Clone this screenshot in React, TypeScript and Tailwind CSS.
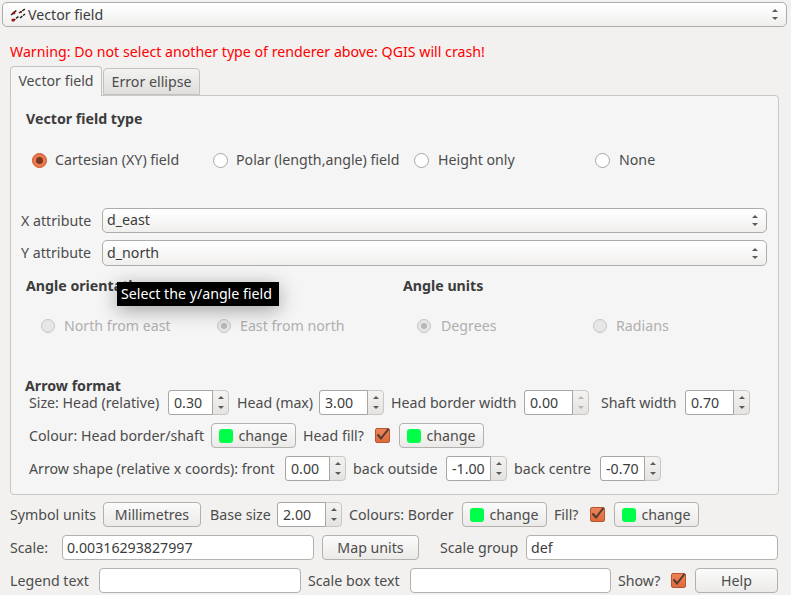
import React from "react";

const textCls = "whitespace-nowrap shrink-0 text-[#4c4c4c]";

// little up/down arrows, as on the gtk spin box and combo
const Arrows = ({ dim, gap }: { dim?: boolean; gap: string }) => (
  <div className={`flex flex-col items-center ${gap}`}>
    <div className={`w-0 h-0 border-x-[3px] border-x-transparent border-b-[3px] ${dim ? "border-b-[#b5b5b5]" : "border-b-[#5a5a5a]"}`} />
    <div className={`w-0 h-0 border-x-[3px] border-x-transparent border-t-[3px] ${dim ? "border-t-[#b5b5b5]" : "border-t-[#5a5a5a]"}`} />
  </div>
);

const Label = ({ w, children }: { w: string; children: React.ReactNode }) => (
  <span className={`${textCls} ${w}`}>{children}</span>
);

const Spin = ({ value, w, dim }: { value: string; w: string; dim?: boolean }) => (
  <div className={`${w} h-[25px] shrink-0 flex rounded-[4px] border border-[#c9c7c4] bg-linear-to-b from-[#f4f3f2] to-[#e4e3e1]`}>
    <div className="flex-1 flex items-center pl-[5px] bg-white rounded-l-[3px] border border-[#a8a6a3] -m-px mr-0 text-[#3c3c3c]">
      {value}
    </div>
    <div className="w-[15px] flex items-center justify-center">
      <Arrows dim={dim} gap="gap-[7px]" />
    </div>
  </div>
);

const Btn = ({ w, children }: { w: string; children: React.ReactNode }) => (
  <div className={`${w} h-[25px] shrink-0 flex items-center justify-center rounded-[4px] border border-[#b3b1ae] bg-linear-to-b from-[#fbfbfb] to-[#ebeae8] text-[#4c4c4c]`}>
    {children}
  </div>
);

const ColourBtn = () => (
  <Btn w="w-[85px]">
    <span className="w-[14px] h-[14px] rounded-[3px] bg-[#00ff48] mr-[5px]" />
    change
  </Btn>
);

const Check = () => (
  <div className="w-[15px] h-[15px] shrink-0 rounded-[2px] border border-[#b5562f] bg-linear-to-b from-[#ee8358] to-[#dd6a3c] flex items-center justify-center">
    <svg viewBox="0 0 15 15" className="w-[15px] h-[15px] overflow-visible">
      <path d="M2.5 6.5 L6 10.5 L13.5 1" fill="none" stroke="#4e3a30" strokeWidth="2" />
    </svg>
  </div>
);

const Radio = ({ on, off }: { on?: boolean; off?: boolean }) => {
  if (off) {
    return (
      <div className="w-[14px] h-[14px] shrink-0 rounded-full border border-[#c4c4c4] bg-[#e6e6e6] flex items-center justify-center">
        {on && <div className="w-[6px] h-[6px] rounded-full bg-[#b8b8b8]" />}
      </div>
    );
  }
  return (
    <div className={`w-[15px] h-[15px] shrink-0 rounded-full border flex items-center justify-center ${on ? "border-[#c9572b] bg-[#ec7a4e]" : "border-[#a9a7a4] bg-white"}`}>
      {on && <div className="w-[7px] h-[7px] rounded-full bg-[#7a3a22]" />}
    </div>
  );
};

const Combo = ({ children, cls }: { children: React.ReactNode; cls: string }) => (
  <div className={`${cls} flex items-center justify-between rounded-[5px] border border-[#aeaca9] bg-linear-to-b from-white to-[#f0efee] text-[#3c3c3c]`}>
    <div className="flex items-center">{children}</div>
    <Arrows gap="gap-[5px]" />
  </div>
);

const Field = ({ w, value }: { w: string; value?: string }) => (
  <div className={`${w} h-[25px] shrink-0 flex items-center pl-[4px] rounded-[4px] border border-[#b3b1ae] bg-white text-[#3c3c3c]`}>
    {value}
  </div>
);

const RadioItem = ({ w, gap, on, off, label }: { w: string; gap: string; on?: boolean; off?: boolean; label: string }) => (
  <div className={`${w} shrink-0 flex items-center ${gap}`}>
    <Radio on={on} off={off} />
    <span className={`whitespace-nowrap ${off ? "text-[#b0afae]" : "text-[#4c4c4c]"}`}>{label}</span>
  </div>
);

export default function App() {
  return (
    <div
      className="relative w-[791px] h-[595px] overflow-hidden bg-[#f2f1f0] text-[14.2px] leading-[20px] pt-[2px]"
      style={{ fontFamily: '"Noto Sans", "Open Sans", sans-serif' }}
    >
      <Combo cls="ml-[2px] w-[785px] h-[25px] pl-[7px] pr-[8px]">
        <svg viewBox="0 0 16 14" className="w-[16px] h-[14px] mr-[2px]">
          <path d="M1 7 L7 2 M3 13 L9 8 M9 5 L15 1 M10 10 L15 6" stroke="#222" strokeWidth="1.5" strokeDasharray="3 1" fill="none" />
          <circle cx="3" cy="12" r="1.6" fill="#a11" />
          <circle cx="4" cy="5" r="1.4" fill="#a11" />
          <circle cx="11" cy="4" r="1.1" fill="#a11" />
        </svg>
        Vector field
      </Combo>

      <div className="ml-[10px] mt-[15px] h-[20px] text-[#ff0000] whitespace-nowrap">
        Warning: Do not select another type of renderer above: QGIS will crash!
      </div>

      {/* tabs */}
      <div className="ml-[10px] mt-[4px] h-[30px] flex items-end relative z-10">
        <div className="w-[92px] h-[30px] pb-[1px] flex items-center justify-center rounded-t-[4px] border border-b-0 border-[#c4c2bf] bg-[#f5f5f5] text-[#4c4c4c]">
          Vector field
        </div>
        <div className="w-[97px] h-[27px] mb-px ml-px flex items-center justify-center rounded-t-[4px] border border-[#c4c2bf] bg-linear-to-b from-[#f3f3f2] to-[#dfdedc] text-[#4c4c4c]">
          Error ellipse
        </div>
      </div>

      {/* main panel */}
      <div className="ml-[10px] -mt-px w-[769px] h-[400px] rounded-b-[4px] rounded-tr-[4px] border border-[#c9c7c4] bg-[#f5f5f5] pt-[13px] text-[#4c4c4c]">
        <div className="ml-[15px] font-bold text-[#3c3c3c]">Vector field type</div>

        <div className="ml-[21px] mt-[21px] h-[20px] flex items-center">
          <RadioItem w="w-[181px]" gap="gap-[8px]" on label="Cartesian (XY) field" />
          <RadioItem w="w-[201px]" gap="gap-[8px]" label="Polar (length,angle) field" />
          <RadioItem w="w-[181px]" gap="gap-[9px]" label="Height only" />
          <RadioItem w="w-[120px]" gap="gap-[9px]" label="None" />
        </div>

        <div className="ml-[10px] mt-[38px] flex items-center">
          <Label w="w-[81px]">X attribute</Label>
          <Combo cls="w-[665px] h-[25px] pl-[4px] pr-[8px] pb-[1px]">d_east</Combo>
        </div>
        <div className="ml-[10px] mt-[7px] flex items-center">
          <Label w="w-[81px]">Y attribute</Label>
          <Combo cls="w-[665px] h-[26px] pl-[4px] pr-[8px]">d_north</Combo>
        </div>

        <div className="ml-[15px] mt-[10px] flex font-bold text-[#3c3c3c]">
          <span className="w-[377px]">Angle orientation</span>
          <span>Angle units</span>
        </div>

        <div className="ml-[30px] mt-[20px] h-[20px] flex items-center">
          <RadioItem w="w-[176px]" gap="gap-[9px]" off label="North from east" />
          <RadioItem w="w-[200px]" gap="gap-[9px]" off on label="East from north" />
          <RadioItem w="w-[176px]" gap="gap-[10px]" off on label="Degrees" />
          <RadioItem w="w-[120px]" gap="gap-[9px]" off label="Radians" />
        </div>

        <div className="ml-[14px] mt-[45px] h-[10px] leading-[10px] font-bold text-[#3c3c3c]">Arrow format</div>

        <div className="ml-[18px] mt-[-1px] flex items-center">
          <Label w="w-[139px]">Size: Head (relative)</Label>
          <Spin value="0.30" w="w-[61px]" />
          <Label w="w-[90px] pl-[8px]">Head (max)</Label>
          <Spin value="3.00" w="w-[65px]" />
          <Label w="w-[140px] pl-[7px]">Head border width</Label>
          <Spin value="0.00" w="w-[65px]" dim />
          <Label w="w-[96px] pl-[12px]">Shaft width</Label>
          <Spin value="0.70" w="w-[65px]" />
        </div>

        <div className="ml-[18px] mt-[8px] flex items-center">
          <Label w="w-[182px]">Colour: Head border/shaft</Label>
          <ColourBtn />
          <Label w="w-[79px] pl-[7px]">Head fill?</Label>
          <Check />
          <div className="w-[9px] shrink-0" />
          <ColourBtn />
        </div>

        <div className="ml-[18px] mt-[8px] flex items-center">
          <Label w="w-[256px]">Arrow shape (relative x coords): front</Label>
          <Spin value="0.00" w="w-[61px]" />
          <Label w="w-[100px] pl-[7px]">back outside</Label>
          <Spin value="-1.00" w="w-[61px]" />
          <Label w="w-[93px] pl-[7px]">back centre</Label>
          <Spin value="-0.70" w="w-[61px]" />
        </div>
      </div>

      {/* bottom rows */}
      <div className="ml-[10px] mt-[7px] flex items-center">
        <Label w="w-[93px]">Symbol units</Label>
        <Btn w="w-[98px]">Millimetres</Btn>
        <Label w="w-[76px] pl-[9px]">Base size</Label>
        <Spin value="2.00" w="w-[65px]" />
        <Label w="w-[120px] pl-[7px]">Colours: Border</Label>
        <ColourBtn />
        <Label w="w-[43px] pl-[7px]">Fill?</Label>
        <Check />
        <div className="w-[9px] shrink-0" />
        <ColourBtn />
      </div>

      <div className="ml-[10px] mt-[8px] flex items-center">
        <Label w="w-[52px]">Scale:</Label>
        <Field w="w-[252px]" value="0.00316293827997" />
        <div className="w-[8px] shrink-0" />
        <Btn w="w-[97px]">Map units</Btn>
        <Label w="w-[107px] pl-[21px]">Scale group</Label>
        <Field w="w-[252px]" value="def" />
      </div>

      <div className="ml-[10px] mt-[8px] flex items-center">
        <Label w="w-[89px]">Legend text</Label>
        <Field w="w-[202px]" />
        <Label w="w-[109px] pl-[7px]">Scale box text</Label>
        <Field w="w-[201px]" />
        <Label w="w-[60px] pl-[7px]">Show?</Label>
        <Check />
        <div className="w-[9px] shrink-0" />
        <Btn w="w-[83px]">Help</Btn>
      </div>

      {/* tooltip over the form */}
      <div className="absolute z-20 left-[117px] top-[282px] w-[162px] h-[24px] flex items-center pl-[4px] bg-black text-white whitespace-nowrap shadow-[0_4px_20px_rgba(0,0,0,0.35)]">
        Select the y/angle field
      </div>
    </div>
  );
}
